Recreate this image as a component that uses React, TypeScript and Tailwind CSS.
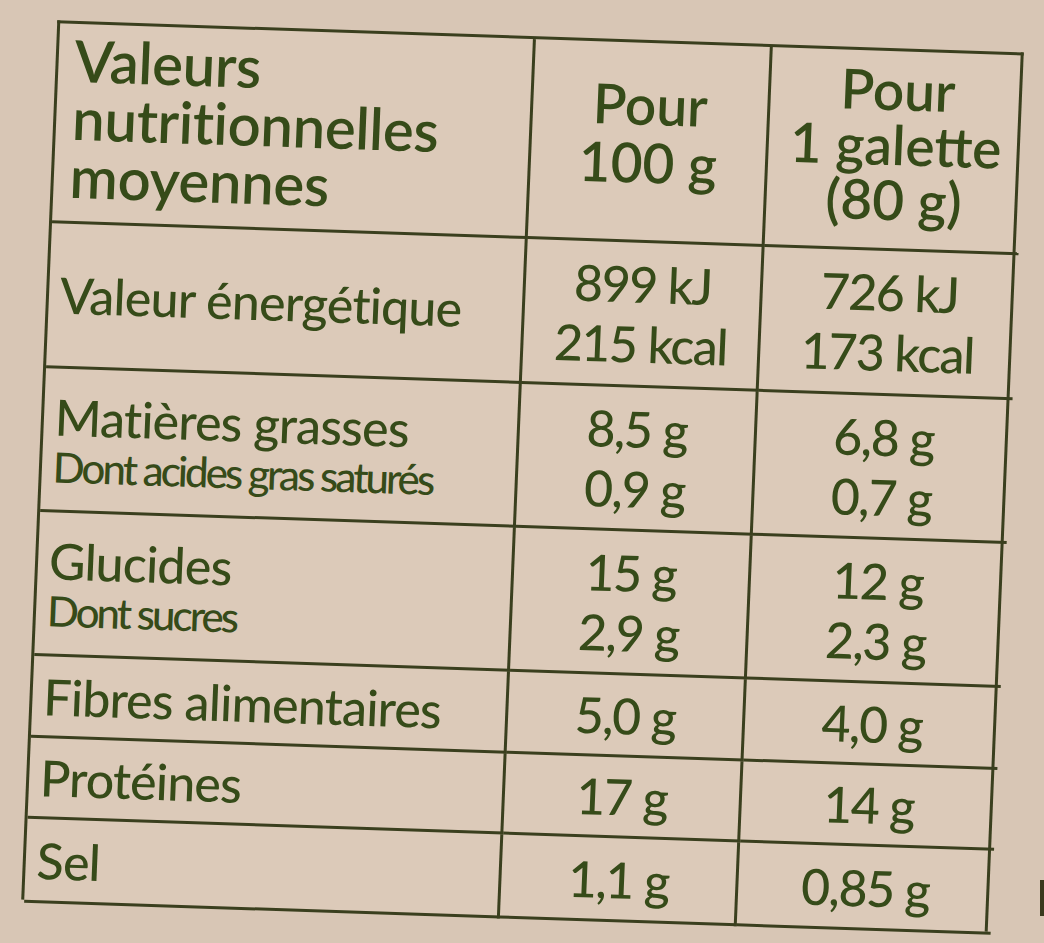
import React from "react";

const ink = "text-[#364b19]";

function Label({ main, sub }: { main: string; sub?: string }) {
  return (
    <div className="flex flex-col justify-center items-start pl-[11px] border-r-[3px] border-b-[3px] border-[#3a3f1e]">
      <div className="text-[50px] leading-[56px] tracking-[-0.015em] font-medium">{main}</div>
      {sub && (
        <div className="text-[42px] leading-[48px] tracking-[-0.07em] font-medium -mt-[2px]">{sub}</div>
      )}
    </div>
  );
}

function Val({ lines, last }: { lines: string[]; last?: boolean }) {
  return (
    <div
      className={
        last
          ? "flex flex-col justify-center items-center border-b-[3px] border-[#3a3f1e]"
          : "flex flex-col justify-center items-center border-r-[3px] border-b-[3px] border-[#3a3f1e]"
      }
    >
      {lines.map((l, i) => (
        <div key={i} className="text-[50px] leading-[60px] tracking-[-0.03em] font-medium whitespace-pre">
          {l}
        </div>
      ))}
    </div>
  );
}

export default function App() {
  const rows: { main: string; sub?: string; a: string[]; b: string[] }[] = [
    { main: "Matières grasses", sub: "Dont acides gras saturés", a: ["8,5 g", "0,9 g"], b: ["6,8 g", "0,7 g"] },
    { main: "Glucides", sub: "Dont sucres", a: ["15 g", "2,9 g"], b: ["12 g", "2,3 g"] },
    { main: "Fibres alimentaires", a: ["5,0 g"], b: ["4,0 g"] },
    { main: "Protéines", a: ["17 g"], b: ["14 g"] },
    { main: "Sel", a: ["1,1 g"], b: ["0,85 g"] },
  ];
  return (
    <div
      className={`relative w-[1044px] h-[943px] overflow-hidden bg-[#d8c6b5] flex items-center justify-center pt-[8px] ${ink}`}
      style={{ fontFamily: "Lato, 'Noto Sans', sans-serif" }}
    >
      <div className="w-[967px] h-[880px] grid grid-cols-[476px_237px_254px] grid-rows-[200px_145px_144px_144px_82px_81px_84px] border-t-[3px] border-l-[3px] border-r-[3px] border-[#3a3f1e] bg-[#dccab9] [transform:rotate(1.9deg)_skewX(-0.45deg)]">
        <div className="flex flex-col justify-center items-start pl-[16px] pb-[10px] border-r-[3px] border-b-[3px] border-[#3a3f1e]">
          <div className="text-[58px] leading-[58px] tracking-[-0.005em] font-semibold">Valeurs</div>
          <div className="text-[58px] leading-[58px] tracking-[-0.005em] font-semibold">nutritionnelles</div>
          <div className="text-[58px] leading-[58px] tracking-[-0.005em] font-semibold">moyennes</div>
        </div>
        <div className="flex flex-col justify-center items-center pb-[18px] border-r-[3px] border-b-[3px] border-[#3a3f1e]">
          <div className="text-[55px] leading-[58px] font-semibold">Pour</div>
          <div className="text-[55px] leading-[58px] font-semibold">100 g</div>
        </div>
        <div className="flex flex-col justify-center items-center pb-[10px] border-b-[3px] border-[#3a3f1e]">
          <div className="text-[55px] leading-[55px] font-semibold">Pour</div>
          <div className="text-[55px] leading-[55px] font-semibold">1 galette</div>
          <div className="text-[55px] leading-[55px] font-semibold">(80 g)</div>
        </div>

        <Label main="Valeur énergétique" />
        <Val lines={["899 kJ", "215 kcal"]} />
        <Val lines={["726 kJ", "173 kcal"]} last />

        {rows.map((r, i) => (
          <React.Fragment key={i}>
            <Label main={r.main} sub={r.sub} />
            <Val lines={r.a} />
            <Val lines={r.b} last />
          </React.Fragment>
        ))}
      </div>
      <div className="absolute right-0 top-[880px] w-[4px] h-[36px] bg-[#3a3a1e]" />
    </div>
  );
}
